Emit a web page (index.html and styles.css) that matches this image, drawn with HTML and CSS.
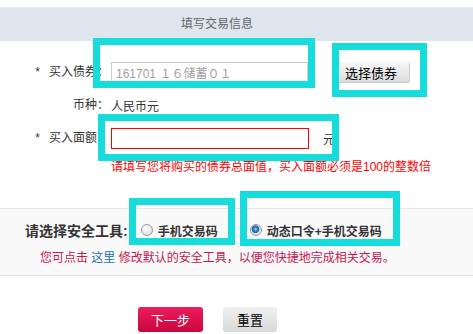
FILE: index.html
```html
<!DOCTYPE html>
<html lang="zh-CN">
<head>
  <meta charset="UTF-8" />
  <meta name="viewport" content="width=device-width, initial-scale=1.0"/>
  <title>填写交易信息</title>
  <link rel="stylesheet" href="styles.css">
</head>
<body>
  <div class="page">
    <div class="title-bar">填写交易信息</div>

    <form class="trade-form">
      <div class="row">
        <label class="label"><span class="req">*</span>买入债券：</label>
        <input type="text" class="field" value="161701 １６储蓄０１" readonly />
        <button type="button" class="btn-pick">选择债券</button>
      </div>
      <div class="row">
        <span class="label">币种：</span>
        <span class="value">人民币元</span>
      </div>
      <div class="row">
        <label class="label no-colon"><span class="req">*</span>买入面额</label>
        <input type="text" class="field field-error" />
        <span class="unit">元</span>
      </div>
      <div class="error-tip">请填写您将购买的债券总面值，买入面额必须是100的整数倍</div>

      <div class="security">
        <div class="security-row">
          <span class="security-label">请选择安全工具:</span>
          <label class="radio"><input type="radio" name="tool" />手机交易码</label>
          <label class="radio"><input type="radio" name="tool" checked />动态口令+手机交易码</label>
        </div>
        <div class="security-note">您可点击 <a href="#">这里</a> 修改默认的安全工具，以便您快捷地完成相关交易。</div>
      </div>

      <div class="actions">
        <button type="button" class="btn-next">下一步</button>
        <button type="reset" class="btn-reset">重置</button>
      </div>
    </form>

    <!-- highlight boxes drawn over the form -->
    <div class="mark mark-bond"></div>
    <div class="mark mark-pick"></div>
    <div class="mark mark-amount"></div>
    <div class="mark mark-phone"></div>
    <div class="mark mark-token"></div>
  </div>
</body>
</html>
```

FILE: styles.css
```css
body {
  margin: 0;
  font-family: "Liberation Sans", "Noto Sans CJK SC", sans-serif;
  font-size: 12px;
  color: #333;
  background: #fff;
}
.page {
  position: relative;
  padding-top: 7px;
}
.title-bar {
  height: 33px;
  line-height: 33px;
  border-top: 1px solid #e9ecf1;
  background: #dfe5ed;
  color: #62656d;
  text-align: center;
  padding-right: 39px;
}
.trade-form {
  padding-top: 21px;
}
.row {
  display: flex;
  align-items: center;
  height: 21px;
}
.row + .row {
  margin-top: 12px;
}
.label {
  box-sizing: border-box;
  width: 109px;
  margin-right: 2px;
  flex: none;
  text-align: right;
  line-height: 21px;
}
.no-colon {
  padding-right: 12px;
}
.req {
  margin-right: 9px;
}
.field {
  box-sizing: border-box;
  width: 197px;
  height: 21px;
  margin: 0;
  padding: 0 4px;
  border: 1px solid #ccc;
  font: inherit;
  color: #a0a0a0;
  outline: none;
}
.field-error {
  width: 198px;
  border-color: #f00;
}
.btn-pick {
  margin-left: 30px;
  width: 72px;
  height: 21px;
  padding: 0 0 0 7px;
  border: none;
  border-radius: 2px;
  background: linear-gradient(#f8f8f8, #dadada);
  box-shadow: inset -1px -1px 0 #cfcfcf;
  font: inherit;
  font-size: 13px;
  color: #000;
  text-align: left;
  cursor: pointer;
}
.unit {
  margin-left: 14px;
}
.error-tip {
  margin-top: 9px;
  padding-left: 111px;
  line-height: 18px;
  color: #f00;
}
.security {
  margin-top: 32px;
  padding: 11px 0 8px 25px;
  border-top: 1px solid #e6e6e6;
  border-bottom: 1px solid #e6e6e6;
  background: #f9f9f9;
}
.security-row {
  display: flex;
  align-items: center;
  height: 20px;
}
.security-label {
  margin-right: 13px;
  font-size: 14px;
  font-weight: bold;
}
.radio {
  display: flex;
  align-items: center;
  font-weight: bold;
}
.radio + .radio {
  margin-left: 32px;
}
.radio input {
  appearance: none;
  width: 12px;
  height: 12px;
  margin: 0 5px 0 0;
  border: 1px solid #999;
  border-radius: 50%;
  background: radial-gradient(circle at 40% 35%, #fff, #d4d4d4);
}
.radio input:checked {
  background: radial-gradient(circle at 45% 42%, #b8e2ff 0, #3f8fd8 1.5px, #1f5fa8 3.5px, #e8e8e8 4.2px, #d2d2d2 100%);
}
.security-note {
  margin-top: 9px;
  padding-left: 15px;
  line-height: 18px;
  color: #c8174e;
}
.security-note a {
  color: #1e6fb3;
  text-decoration: none;
}
.actions {
  display: flex;
  gap: 20px;
  margin-top: 31px;
  padding-left: 138px;
}
.btn-next,
.btn-reset {
  height: 25px;
  border: none;
  border-radius: 3px;
  font: inherit;
  font-size: 13px;
  cursor: pointer;
}
.btn-next {
  width: 65px;
  background: linear-gradient(#ee1d5e, #c8063e);
  color: #fff;
}
.btn-reset {
  width: 54px;
  background: linear-gradient(#f0f0f0, #d9d9d9);
  color: #000;
}
.mark {
  position: absolute;
  box-sizing: border-box;
  border: 7px solid #17dcdc;
}
.mark-bond {
  left: 93px;
  top: 38px;
  width: 222px;
  height: 50px;
}
.mark-pick {
  left: 332px;
  top: 43px;
  width: 95px;
  height: 54px;
}
.mark-amount {
  left: 98px;
  top: 114px;
  width: 241px;
  height: 47px;
}
.mark-phone {
  left: 129px;
  top: 198px;
  width: 106px;
  height: 47px;
}
.mark-token {
  left: 240px;
  top: 191px;
  width: 160px;
  height: 55px;
}
```
